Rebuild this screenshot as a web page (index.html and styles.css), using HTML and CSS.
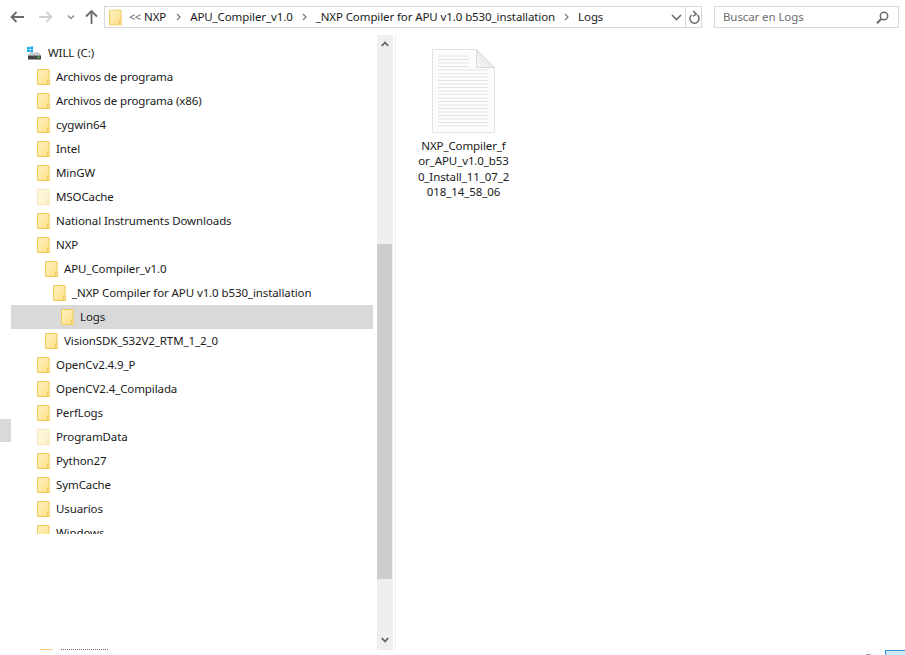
FILE: index.html
```html
<!DOCTYPE html>
<html lang="es">
<head>
<meta charset="utf-8">
<title>Logs</title>
<link rel="stylesheet" href="styles.css">
</head>
<body>
<svg class="defs" width="0" height="0" aria-hidden="true">
  <defs>
    <linearGradient id="fg" x1="0" y1="0" x2="1" y2="1">
      <stop offset="0" stop-color="#fff3c0"/><stop offset="1" stop-color="#fcdc84"/>
    </linearGradient>
    <linearGradient id="foldg" x1="0" y1="1" x2="1" y2="0">
      <stop offset="0" stop-color="#f7f7f7"/><stop offset="1" stop-color="#dcdcdc"/>
    </linearGradient>
    <symbol id="folder" viewBox="0 0 13 16">
      <path d="M.5.5h11.5v10.500h1v4.500h-12.500z" fill="url(#fg)" stroke="#efca5c"/>
      <path d="M10.500 15.500v-4.500h2" fill="none" stroke="#efca5c"/>
    </symbol>
  </defs>
</svg>
<div class="window">
  <header class="toolbar">
    <div class="nav">
      <svg class="ic back" width="14" height="12" viewBox="0 0 14 12"><path d="M6.500 1 1.500 6l5 5M2 6h12" fill="none" stroke="#6b6b6b" stroke-width="1.800"/></svg>
      <svg class="ic fwd" width="14" height="12" viewBox="0 0 14 12"><path d="M7.500 1l5 5-5 5M12 6H0" fill="none" stroke="#d0d0d0" stroke-width="1.800"/></svg>
      <svg class="ic down" width="8" height="5" viewBox="0 0 8 5"><path d="M1 .5l3 3 3-3" fill="none" stroke="#8a8a8a" stroke-width="1.400"/></svg>
      <svg class="ic up" width="13" height="14" viewBox="0 0 13 14"><path d="M1 6.500l5.500-5.500 5.500 5.500M6.500 1.500V14" fill="none" stroke="#6b6b6b" stroke-width="1.800"/></svg>
    </div>
    <div class="address">
      <svg class="crumb-folder" width="13" height="17" viewBox="0 0 13 16"><use href="#folder"/></svg>
      <span class="more">&lt;&lt;</span>
      <span class="crumb crumb-first">NXP</span>
      <svg class="sep" width="5" height="8" viewBox="0 0 5 8"><path d="M1 1l3 3-3 3" fill="none" stroke="#777" stroke-width="1.200"/></svg>
      <span class="crumb">APU_Compiler_v1.0</span>
      <svg class="sep" width="5" height="8" viewBox="0 0 5 8"><path d="M1 1l3 3-3 3" fill="none" stroke="#777" stroke-width="1.200"/></svg>
      <span class="crumb">_NXP Compiler for APU v1.0 b530_installation</span>
      <svg class="sep" width="5" height="8" viewBox="0 0 5 8"><path d="M1 1l3 3-3 3" fill="none" stroke="#777" stroke-width="1.200"/></svg>
      <span class="crumb">Logs</span>
      <span class="fill"></span>
      <svg class="addr-drop" width="11" height="7" viewBox="0 0 11 7"><path d="M1 1l4.500 4.500L10 1" fill="none" stroke="#6b6b6b" stroke-width="1.600"/></svg>
      <span class="addr-div"></span>
      <svg class="refresh" width="11" height="14" viewBox="0 0 11 14"><path d="M2.600 5a4.600 4.600 0 1 0 5.800 0M4.300 1 7.300 4.200 4 6.200" fill="none" stroke="#6b6b6b" stroke-width="1.500"/></svg>
    </div>
    <div class="search">
      <span class="search-text">Buscar en Logs</span>
      <svg width="13" height="13" viewBox="0 0 13 13"><circle cx="8" cy="5" r="3.700" fill="none" stroke="#6b6b6b" stroke-width="1.500"/><path d="M5.200 8 1 12.200" stroke="#6b6b6b" stroke-width="2"/></svg>
    </div>
  </header>
  <main class="main">
    <div class="gutter"><span class="gutter-mark"></span></div>
    <div class="tree-col">
      <ul class="tree">
        <li class="row l0 drive-row">
          <svg class="drive" width="16" height="14" viewBox="0 0 16 14">
            <path d="M0 1.200l2.800-.4v2.400H0zM3.400 .7 6 .3v2.900H3.400zM0 3.800h2.800v2.300L0 5.800zM3.400 3.800H6v2.800l-2.600-.4z" fill="#0ba6ee"/>
            <path d="M2.500 6.500h9.500l2 3H1z" fill="#c9cccd"/>
            <path d="M1 9.500h13v4H1z" fill="#454545"/>
            <rect x="10.500" y="10.500" width="2" height="1.500" fill="#4fd66a"/>
          </svg>
          <span>WILL (C:)</span>
        </li>
        <li class="row l0"><svg class="fld" viewBox="0 0 13 16"><use href="#folder"/></svg><span>Archivos de programa</span></li>
        <li class="row l0"><svg class="fld" viewBox="0 0 13 16"><use href="#folder"/></svg><span>Archivos de programa (x86)</span></li>
        <li class="row l0"><svg class="fld" viewBox="0 0 13 16"><use href="#folder"/></svg><span>cygwin64</span></li>
        <li class="row l0"><svg class="fld" viewBox="0 0 13 16"><use href="#folder"/></svg><span>Intel</span></li>
        <li class="row l0"><svg class="fld" viewBox="0 0 13 16"><use href="#folder"/></svg><span>MinGW</span></li>
        <li class="row l0"><svg class="fld faded" viewBox="0 0 13 16"><use href="#folder"/></svg><span>MSOCache</span></li>
        <li class="row l0"><svg class="fld" viewBox="0 0 13 16"><use href="#folder"/></svg><span>National Instruments Downloads</span></li>
        <li class="row l0"><svg class="fld" viewBox="0 0 13 16"><use href="#folder"/></svg><span>NXP</span></li>
        <li class="row l1"><svg class="fld" viewBox="0 0 13 16"><use href="#folder"/></svg><span>APU_Compiler_v1.0</span></li>
        <li class="row l2"><svg class="fld" viewBox="0 0 13 16"><use href="#folder"/></svg><span>_NXP Compiler for APU v1.0 b530_installation</span></li>
        <li class="row l3 selected"><svg class="fld" viewBox="0 0 13 16"><use href="#folder"/></svg><span>Logs</span></li>
        <li class="row l1"><svg class="fld" viewBox="0 0 13 16"><use href="#folder"/></svg><span>VisionSDK_S32V2_RTM_1_2_0</span></li>
        <li class="row l0"><svg class="fld" viewBox="0 0 13 16"><use href="#folder"/></svg><span>OpenCv2.4.9_P</span></li>
        <li class="row l0"><svg class="fld" viewBox="0 0 13 16"><use href="#folder"/></svg><span>OpenCV2.4_Compilada</span></li>
        <li class="row l0"><svg class="fld" viewBox="0 0 13 16"><use href="#folder"/></svg><span>PerfLogs</span></li>
        <li class="row l0"><svg class="fld faded" viewBox="0 0 13 16"><use href="#folder"/></svg><span>ProgramData</span></li>
        <li class="row l0"><svg class="fld" viewBox="0 0 13 16"><use href="#folder"/></svg><span>Python27</span></li>
        <li class="row l0"><svg class="fld" viewBox="0 0 13 16"><use href="#folder"/></svg><span>SymCache</span></li>
        <li class="row l0"><svg class="fld" viewBox="0 0 13 16"><use href="#folder"/></svg><span>Usuarios</span></li>
        <li class="row l0"><svg class="fld" viewBox="0 0 13 16"><use href="#folder"/></svg><span>Windows</span></li>
      </ul>
      <div class="peek"><span class="peek-folder"></span><span class="peek-text"></span></div>
    </div>
    <div class="scrollbar">
      <svg class="arrow" width="8" height="6" viewBox="0 0 8 6"><path d="M.8 5 4 1.500 7.200 5" fill="none" stroke="#606060" stroke-width="1.800"/></svg>
      <div class="track"><div class="thumb"></div></div>
      <svg class="arrow" width="8" height="6" viewBox="0 0 8 6"><path d="M.8 1 4 4.500 7.200 1" fill="none" stroke="#606060" stroke-width="1.800"/></svg>
    </div>
    <div class="divider"></div>
    <section class="files">
      <figure class="file">
        <svg class="doc" width="63" height="84" viewBox="0 0 63 84">
          <path d="M.5.500h44l18 18v65H.5z" fill="#fdfdfd" stroke="#e2e2e2"/>
          <path d="M44.500.500v18h18z" fill="url(#foldg)" stroke="#dcdcdc"/>
          <path d="M6 7h31M6 10.500h31M6 14h31M6 17.500h31M6 21h50M6 24.500h50M6 28h50M6 31.500h50M6 35h50M6 38.500h50M6 42h50M6 45.500h50M6 49h50M6 52.500h50M6 56h50M6 59.500h50M6 63h50M6 66.500h50M6 70h50M6 73.500h50M6 77h50" stroke="#e3e3e3"/>
        </svg>
        <figcaption class="file-name">
          <span>NXP_Compiler_f</span>
          <span>or_APU_v1.0_b53</span>
          <span>0_Install_11_07_2</span>
          <span>018_14_58_06</span>
        </figcaption>
      </figure>
      <div class="status-bits">
        <span class="tick"></span>
        <span class="view-btn"></span>
      </div>
    </section>
  </main>
</div>
</body>
</html>
```
FILE: styles.css
```css
* { box-sizing: border-box; }
html, body { margin: 0; padding: 0; background: #fff; }
body { width: 905px; height: 655px; overflow: hidden; font: 11.5px/16px "Noto Sans", "Open Sans", sans-serif; letter-spacing: -.1px; color: #1a1a1a; }
.defs { display: block; height: 0; }
.window { display: flex; flex-direction: column; width: 905px; height: 655px; }

.toolbar { display: flex; align-items: flex-start; height: 35px; padding-top: 6px; flex: none; }
.nav { display: flex; align-items: center; width: 104px; height: 22px; padding-left: 10px; }
.ic { flex: none; display: block; }
.fwd { margin-left: 15px; }
.down { margin-left: 14px; }
.up { margin-left: 10px; }

.address { display: flex; align-items: center; width: 598px; height: 22px; border: 1px solid #d9d9d9; }
.crumb-folder { flex: none; margin-left: 4px; margin-top: 1px; }
.more { margin-left: 7px; width: 15px; color: #666; font-size: 11px; letter-spacing: -.5px; }
.crumb { white-space: nowrap; }
.crumb-first { margin-right: 1px; }
.sep { flex: none; margin: 0 9px; }
.fill { flex: 1; }
.addr-drop { flex: none; margin-right: 3px; }
.addr-div { width: 1px; height: 20px; background: #d9d9d9; }
.refresh { flex: none; margin: 0 1px 0 3px; }

.search { display: flex; align-items: center; justify-content: space-between; width: 185px; height: 22px; margin-left: 12px; padding: 0 9px 0 8px; border: 1px solid #d9d9d9; }
.search-text { color: #6d6d6d; }

.main { display: flex; flex: 1; min-height: 0; }
.gutter { width: 11px; flex: none; padding-top: 384px; }
.gutter-mark { display: block; height: 23px; background: #d9d9d9; }

.tree-col { display: flex; flex-direction: column; width: 362px; flex: none; }
.tree { list-style: none; margin: 0; padding: 6px 0 0; height: 499px; overflow: hidden; flex: none; }
.row { display: flex; align-items: center; height: 24px; white-space: nowrap; }
.row span { margin-left: 6px; }
.fld { width: 13px; height: 16px; flex: none; display: block; }
.faded { opacity: .45; }
.l0 { padding-left: 26px; }
.l1 { padding-left: 34px; }
.l2 { padding-left: 42px; }
.l3 { padding-left: 50px; }
.selected { background: #d9d9d9; }
.drive-row { padding-left: 16px; }
.drive { flex: none; margin-right: -1px; }

.peek { display: flex; height: 1px; margin-top: 115px; padding-left: 29px; flex: none; }
.peek-folder { width: 13px; height: 1px; background: #f6d27a; }
.peek-text { width: 47px; height: 1px; margin-left: 8px; border-top: 1px dotted #666; }

.scrollbar { display: flex; flex-direction: column; align-items: center; width: 16px; height: 615px; margin-left: 4px; padding: 6px 0 7px; background: #efefef; flex: none; }
.arrow { flex: none; display: block; }
.track { flex: 1; width: 100%; padding-top: 197px; }
.thumb { width: 15px; height: 335px; background: #cdcdcd; }
.divider { width: 1px; height: 615px; margin-left: 2px; background: #f0f0f0; flex: none; }

.files { display: flex; flex-direction: column; justify-content: space-between; flex: 1; min-width: 0; }
.file { display: flex; flex-direction: column; align-items: center; width: 101px; margin: 14px 0 0 17px; }
.doc { display: block; flex: none; }
.file-name { margin-top: 5px; text-align: center; line-height: 15.300px; white-space: nowrap; }
.file-name span { display: block; }
.status-bits { display: flex; align-items: flex-end; justify-content: flex-end; height: 5px; }
.tick { width: 5px; height: 1px; margin-right: 14px; background: #a8a8a8; }
.view-btn { width: 20px; height: 5px; border: 1px solid #2d96d8; border-bottom: 0; border-right: 0; background: #cfe8f7; }
```
